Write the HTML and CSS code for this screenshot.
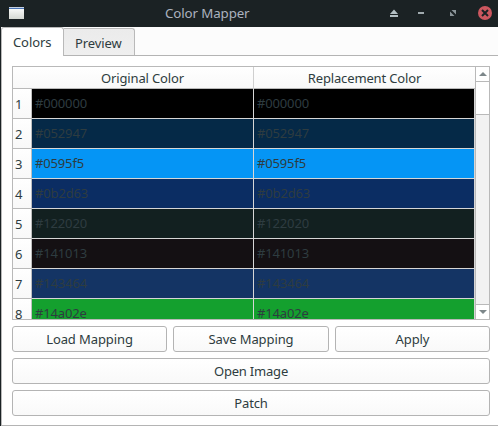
FILE: index.html
```html
<!DOCTYPE html>
<html lang="en">
<head>
<meta charset="utf-8">
<title>Color Mapper</title>
<link rel="stylesheet" href="styles.css">
</head>
<body>
<div class="window">
  <header class="titlebar">
    <svg class="app-icon" width="15" height="12" viewBox="0 0 15 12"><defs><linearGradient id="g" x2="0" y2="1"><stop offset="0" stop-color="#fff"/><stop offset="1" stop-color="#d5d8d3"/></linearGradient></defs><rect width="15" height="12" fill="url(#g)"/><rect width="15" height="1" fill="#c3d0e4"/><rect y="1" width="15" height="1" fill="#4973b5"/></svg>
    <span class="title">Color Mapper</span>
    <svg class="controls" width="104" height="14" viewBox="0 0 104 14">
      <path d="M0 8L4 3.4L8 8ZM0 9h8v2H0Z" fill="#b3bfc3"/>
      <path d="M28 6h6v2h-6Z" fill="#a0aaae"/>
      <path d="M61.5 4h4.5v4.5ZM60 5.5v4.5h4.5Z" fill="#8b9599"/>
      <circle cx="95" cy="7" r="7" fill="#cd575f"/>
      <path d="M92 4l6 6M98 4l-6 6" stroke="#1b2224" stroke-width="2"/>
    </svg>
  </header>
  <nav class="tabs"><span class="tab active">Colors</span><span class="tab">Preview</span></nav>
  <main class="page">
    <section class="table">
      <div class="grid">
        <div class="head"><span></span><span>Original Color</span><span>Replacement Color</span></div>
        <div class="row black"><b>1</b><span>#000000</span><span>#000000</span></div>
        <div class="row navy"><b>2</b><span>#052947</span><span>#052947</span></div>
        <div class="row azure"><b>3</b><span>#0595f5</span><span>#0595f5</span></div>
        <div class="row blue"><b>4</b><span>#0b2d63</span><span>#0b2d63</span></div>
        <div class="row pine"><b>5</b><span>#122020</span><span>#122020</span></div>
        <div class="row plum"><b>6</b><span>#141013</span><span>#141013</span></div>
        <div class="row steel"><b>7</b><span>#143464</span><span>#143464</span></div>
        <div class="row green"><b>8</b><span>#14a02e</span><span>#14a02e</span></div>
      </div>
      <div class="scrollbar">
        <div class="arrow"><svg width="8" height="4" viewBox="0 0 8 4"><path d="M0 4L4 0L8 4Z"/></svg></div>
        <div class="thumb"></div>
        <div class="track"></div>
        <div class="arrow down"><svg width="8" height="4" viewBox="0 0 8 4"><path d="M0 0L4 4L8 0Z"/></svg></div>
      </div>
    </section>
    <div class="buttons"><button>Load Mapping</button><button>Save Mapping</button><button>Apply</button></div>
    <button class="wide">Open Image</button>
    <button>Patch</button>
  </main>
</div>
</body>
</html>
```
FILE: styles.css
```css
* { box-sizing: border-box; }
body { margin: 0; overflow: hidden; }
.window {
  width: 498px; height: 426px;
  display: flex; flex-direction: column;
  border-left: 1px solid #1b2224;
  background: #fff;
  color: #2e3c40;
  font: 13px/18px "Noto Sans", sans-serif;
  letter-spacing: -0.1px;
}
.titlebar {
  height: 27px; flex: none;
  display: grid; grid-template-columns: 164px 1fr 104px;
  align-items: start;
  padding-right: 4px;
  background: #1b2224; color: #abb2bf;
}
.app-icon { margin: 7px 0 0 8px; }
.controls { margin-top: 6px; }
.title { font-size: 13.33px; line-height: 27px; letter-spacing: -0.12px; }
.tabs {
  height: 29px; flex: none;
  display: flex; align-items: flex-end;
  background: #fcfcfc;
  border-bottom: 1px solid #b4b4b4;
}
.tab {
  height: 27px; width: 71px;
  padding: 5px 0 0 11px;
  border: 1px solid #b9b9b9; border-left: 0; border-bottom: 0;
  border-radius: 0 3px 0 0;
  background: linear-gradient(#ebebeb, #efefef);
}
.tab.active {
  width: 63px; height: 29px; margin-bottom: -1px;
  border-left: 1px solid #b9b9b9;
  border-radius: 3px 3px 0 0;
  background: #fff;
}
.page {
  flex: 1;
  display: flex; flex-direction: column; gap: 6px;
  padding: 10px 8px 9px 10px;
  border-left: 1px solid #b9b9b9; border-bottom: 1px solid #b4b4b4;
}
.table {
  height: 254px; flex: none;
  display: flex; overflow: hidden;
  border: 1px solid #b9b9b9;
}
.grid { width: 462px; flex: none; }
.head, .row { display: grid; grid-template-columns: 19px 222px 221px; }
.head {
  height: 22px; line-height: 22px; text-align: center;
  letter-spacing: -0.15px;
  background: linear-gradient(#fff, #f8f8f8);
  border-bottom: 1px solid #b9b9b9;
}
.head span:nth-child(2) { border-right: 1px solid #cfcfcf; }
.row { height: 30px; line-height: 28px; grid-template-rows: 30px; }
.row b {
  font-weight: 400; padding: 1px 0 0 2px;
  border-right: 1px solid #c0c0c0; border-bottom: 1px solid #b9b9b9;
  background: linear-gradient(#fff, #f8f8f8);
}
.row span {
  padding-left: 3px; letter-spacing: -0.15px;
  border-right: 1px solid #d6d6d6; border-bottom: 1px solid #d6d6d6;
}
.black span { background: #000; }
.navy span { background: #052947; }
.azure span { background: #0595f5; }
.blue span { background: #0b2d63; }
.pine span { background: #122020; }
.plum span { background: #141013; }
.steel span { background: #143464; }
.green span { background: #14a02e; }
.scrollbar {
  flex: 1;
  display: flex; flex-direction: column;
  border-left: 1px solid #b9b9b9;
}
.arrow {
  height: 15px; flex: none;
  display: flex; align-items: center; justify-content: center;
  background: #fff; border-bottom: 1px solid #b9b9b9;
}
.arrow.down { border-bottom: 0; border-top: 1px solid #b9b9b9; }
.arrow path { fill: #7d878a; }
.thumb { height: 33px; flex: none; background: #fff; border-bottom: 1px solid #b9b9b9; }
.track { flex: 1; background: #f2f2f2; }
.buttons { display: grid; grid-template-columns: 155px 156px 155px; gap: 6px; }
button {
  height: 26px; padding: 0; flex: none;
  border: 1px solid #b4b4b4; border-radius: 3px;
  background: linear-gradient(#fff, #f9f9f9);
  color: inherit; font: inherit; letter-spacing: -0.1px;
}
.wide { letter-spacing: -0.2px; }
```
